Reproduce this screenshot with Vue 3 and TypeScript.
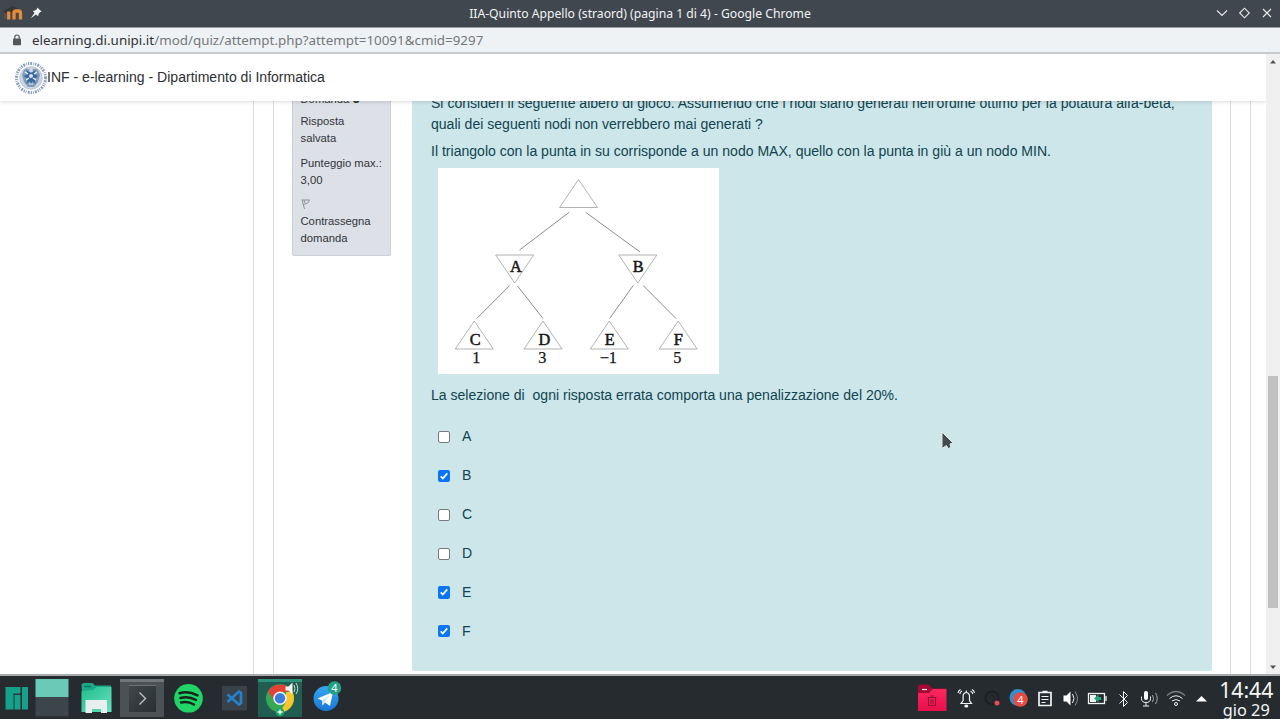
<script setup lang="ts">
import { ref } from 'vue'

interface Answer {
  label: string
  checked: boolean
}

interface TreeNode {
  label: string
  x: number
  y: number
  up: boolean
  textX: number
  value?: string
  valueX?: number
}

const answers = ref<Answer[]>([
  { label: 'A', checked: false },
  { label: 'B', checked: true },
  { label: 'C', checked: false },
  { label: 'D', checked: false },
  { label: 'E', checked: true },
  { label: 'F', checked: true },
])

const nodes: TreeNode[] = [
  { label: '', x: 140.5, y: 11.5, up: true, textX: 0 },
  { label: 'A', x: 76.7, y: 87, up: false, textX: 78 },
  { label: 'B', x: 199.8, y: 87, up: false, textX: 200.3 },
  { label: 'C', x: 36.3, y: 153, up: true, textX: 37.2, value: '1', valueX: 38.3 },
  { label: 'D', x: 105, y: 153, up: true, textX: 106.3, value: '3', valueX: 104.3 },
  { label: 'E', x: 171.3, y: 153, up: true, textX: 171.8, value: '−1', valueX: 170.3 },
  { label: 'F', x: 240.2, y: 153, up: true, textX: 240.3, value: '5', valueX: 239.3 },
]

const edges: number[][] = [
  [131.2, 44.3, 81.5, 82],
  [147.7, 44.3, 202, 84],
  [71.7, 117.5, 38.7, 150.5],
  [79.500, 118, 105, 150.5],
  [195.2, 117.5, 171.7, 150.5],
  [205.2, 117.5, 238, 150.5],
]

function shape(n: TreeNode): string {
  const top = n.up ? n.y : n.y + 28
  const base = n.up ? n.y + 28 : n.y
  return `${n.x},${top} ${n.x + 19},${base} ${n.x - 19},${base}`
}
</script>

<template>
  <div class="screen">
    <header class="titlebar">
      <svg class="moodle" width="22" height="18" viewBox="0 0 22 18">
        <path d="M0 7 10 2 15 5 9 8 2 9z" fill="#343638" />
        <path d="M5.700 15.500V7.500M11 15.500V9Q11 7 13 7H15.500Q17.500 7 17.500 9V15.500" fill="none" stroke="#e78b36" stroke-width="3.300" />
        <path d="M2 9v5" stroke="#626365" />
      </svg>
      <svg class="pin" width="12" height="12" viewBox="0 0 12 12">
        <path d="M7.300.4 11.600 4.500 10.300 5 8.500 7 8.300 9.200 5.900 7.400.6 11.500 4.500 6 2.800 4 5.100 3.600 7 2z" fill="#f5f6f6" />
      </svg>
      <span class="window-title">IIA-Quinto Appello (straord) (pagina 1 di 4) - Google Chrome</span>
      <svg class="controls" width="56" height="14" viewBox="0 0 56 14">
        <path d="M1 4.500 6 9.500 11 4.500M23.700 7 28.500 2.200 33.300 7 28.500 11.800zM47 3l8 8m0-8-8 8" fill="none" stroke="#e8eaeb" stroke-width="1.100" />
      </svg>
    </header>

    <div class="urlbar">
      <svg class="lock" width="10" height="12" viewBox="0 0 10 12">
        <path d="M2.800 5V3.200a2.200 2.200 0 0 1 4.400 0V5" fill="none" stroke="#54575a" stroke-width="1.200" />
        <rect x="1" y="4.500" width="8" height="6.700" rx=".8" fill="#54575a" />
      </svg>
      <span class="url"><b>elearning.di.unipi.it</b>/mod/quiz/attempt.php?attempt=10091&amp;cmid=9297</span>
    </div>

    <div class="viewport">
      <main class="page">
        <nav class="navbar">
          <svg class="seal" width="34" height="34" viewBox="0 0 34 34" fill="none">
            <circle cx="17" cy="17" r="14.500" stroke="#8ba0bd" stroke-width="3" stroke-dasharray="1.300 1 2 1.200 .8 .9" />
            <circle cx="17" cy="17" r="11.300" fill="#cad6e3" stroke="#a9b8cc" stroke-width=".7" />
            <path d="M10 9q3-3 6 0l1 3 1-3q3-3 6 0l2 5-2 7-4 5h-6l-4-5-2-7z" fill="#809abb" />
            <path d="M12 9l2 4-4 2 4 3-2 5 4-3 1 5 1-5 4 3-2-5 4-3-4-2 2-4-5 3z" fill="#37669a" />
            <path d="M11 11l3 2m6 0 3-2M12 19l3-2m4 0 3 2M15 10h4M15 23h4" stroke="#edf3fa" stroke-width="1.200" />
            <circle cx="17" cy="15" r="2" fill="#d9e4ef" />
          </svg>
          <span class="brand">INF - e-learning - Dipartimento di Informatica</span>
        </nav>
        <div class="scroll">
          <div class="gutter"></div>
          <div class="region">
            <aside class="info">
              <p class="number">Domanda <b>9</b></p>
              <p>Risposta<br />salvata</p>
              <p>Punteggio max.:<br />3,00</p>
              <div class="flag">
                <svg width="10" height="12" viewBox="0 0 10 12"><path d="M1 1.500 3.500 11M1.500 2h7L6.800 5 2.500 6.500M3 2l1 3" fill="none" stroke="#85898d" stroke-width=".9" /></svg>
                <span>Contrassegna<br />domanda</span>
              </div>
            </aside>
            <section class="question">
              <p class="line-one">Si consideri il seguente albero di gioco. Assumendo che i nodi siano generati nell'ordine ottimo per la potatura alfa-beta,<br />quali dei seguenti nodi non verrebbero mai generati ?</p>
              <p class="note">Il triangolo con la punta in su corrisponde a un nodo MAX, quello con la punta in giù a un nodo MIN.</p>
              <svg class="tree" width="281" height="206" viewBox="0 0 281 206">
                <line v-for="(e, i) in edges" :key="i" :x1="e[0]" :y1="e[1]" :x2="e[2]" :y2="e[3]" />
                <g v-for="n in nodes" :key="n.label">
                  <polygon :points="shape(n)" />
                  <text v-if="n.label" :x="n.textX" :y="n.up ? n.y + 23.500 : n.y + 16.500" class="letter">{{ n.label }}</text>
                  <text v-if="n.value" :x="n.valueX" :y="n.y + 41.800">{{ n.value }}</text>
                </g>
              </svg>
              <p class="penalty">La selezione di&nbsp; ogni risposta errata comporta una penalizzazione del 20%.</p>
              <div class="answers">
                <label v-for="a in answers" :key="a.label" class="answer">
                  <input v-model="a.checked" type="checkbox" />
                  <span class="box" :class="{ on: a.checked }">
                    <svg v-if="a.checked" width="12" height="12" viewBox="0 0 13 13"><path d="M3 6.900 5.200 9.200 10 3.700" fill="none" stroke="#fff" stroke-width="1.900" /></svg>
                  </span>
                  <span>{{ a.label }}</span>
                </label>
              </div>
            </section>
          </div>
          <div class="margin"></div>
        </div>
      </main>
      <div class="scrollbar">
        <svg width="8" height="5" viewBox="0 0 8 5"><path d="M1 4.500 4 1l3 3.500z" fill="#505050" /></svg>
        <div class="thumb"></div>
        <svg class="down" width="8" height="5" viewBox="0 0 8 5"><path d="M1 .5 4 4 7 .5z" fill="#505050" /></svg>
      </div>
      <svg class="cursor" width="16" height="22" viewBox="0 0 16 22">
        <path d="M3 2v16.500l4.500-3 1.500 3 3-1-1-3.500 3-1z" fill="#444b4e" stroke="#e4eeee" stroke-width="1" />
      </svg>
    </div>

    <footer class="taskbar">
      <div class="launchers">
        <svg width="350" height="43" viewBox="0 0 350 43">
          <defs>
            <linearGradient id="folder" x1="0" y1="0" x2="1" y2="1"><stop stop-color="#20bd8d" /><stop offset="1" stop-color="#67e2be" /></linearGradient>
            <linearGradient id="tile" x1="0" y1="0" x2="1" y2="1"><stop stop-color="#40484b" /><stop offset="1" stop-color="#292f31" /></linearGradient>
            <linearGradient id="sky" x1="0" y1="0" x2="0" y2="1"><stop stop-color="#36a8ef" /><stop offset="1" stop-color="#1877d5" /></linearGradient>
          </defs>
          <path d="M5.500 11h15v6h-7v16.500h-8zM14.500 19h6v14.500h-6zM22 11h6v22.500h-6z" fill="#18a18a" />
          <path d="M13.300 33V17.700h7" fill="none" stroke="#157d6d" />
          <rect x="35.500" y="3" width="33" height="18" fill="#6bc9b7" />
          <rect x="35.500" y="21" width="33" height="19.500" fill="#3c454a" />
          <path d="M81.500 8.500 83.500 7h9l2.500 2.500h16V16h-29z" fill="#1da989" />
          <path d="M81.500 15l12-1 3-3h15v25h-30z" fill="url(#folder)" />
          <path d="M84 10.500h7" stroke="#0d755f" stroke-width="1.500" />
          <path d="M85.500 24h21.500v13H101v-4h-9v4h-6.500z" fill="#e9eeee" />
          <rect x="120" y="3" width="44" height="38" fill="#4b5256" /><rect x="120" y="3" width="44" height="3" fill="#71777b" />
          <rect x="129" y="9" width="27" height="27" fill="url(#tile)" /><path d="M129 9.500h27" stroke="#6c7274" /><path d="M139.500 16.500l6 6-6 6" fill="none" stroke="#c0c3c4" stroke-width="1.400" />
          <circle cx="188.500" cy="22.300" r="14.300" fill="#20d565" />
          <path d="M179.500 17.200q9-2.500 18 2.200M180.500 22q8.500-2 15.500 2M181 26.500q7-1.500 13 2" fill="none" stroke="#17231d" stroke-width="2.500" stroke-linecap="round" />
          <rect x="222" y="10" width="25" height="24.500" fill="#394149" />
          <path d="M227.500 18.500 239 28.500l2-1.500V17l-2-1.500L227.500 26" fill="none" stroke="#2382cc" stroke-width="2.700" stroke-linejoin="round" />
          <rect x="258" y="3" width="44" height="38" fill="#215e51" /><rect x="258" y="3" width="44" height="3" fill="#2b937b" />
          <circle cx="280" cy="22.300" r="14" fill="#36a852" />
          <path d="M268 15.300A14 14 0 0 1 292.100 15.300L280 16.300l-5.500 9z" fill="#e34133" />
          <path d="M292.100 15.300A14 14 0 0 1 280 36.300l6-10.500 0-9.500z" fill="#fbc52c" />
          <circle cx="280" cy="22.300" r="6.700" fill="#f5f5f4" /><circle cx="280" cy="22.300" r="5.200" fill="#3b7ddd" />
          <path d="M285.500 10.500h3l4-4v12l-4-4h-3z" fill="#f1f4f3" /><path d="M294 9q2 3.500 0 7m2-9q3.500 5.500 0 11" fill="none" stroke="#cbd7d3" />
          <circle cx="280" cy="36" r="4.300" fill="#19a765" /><path d="M277.500 36h5m-2.500-2.500v5" stroke="#fff" stroke-width="1.300" />
          <circle cx="326" cy="22.500" r="12.500" fill="url(#sky)" />
          <path d="M317.500 22.500 333 16l-3 14-5-3.500-2.500 3-.5-5z" fill="#fff" /><path d="M322 24.500l8-6-5.500 7.500-2 3.500z" fill="#cfe0ec" />
          <circle cx="334.500" cy="12" r="6.800" fill="#20a188" /><text x="334.500" y="16" class="badge">4</text>
        </svg>
      </div>
      <div class="tray">
        <svg width="300" height="43" viewBox="910 0 300 43" fill="none" stroke="#f1f2f2">
          <defs>
            <linearGradient id="trash" x1="0" y1="0" x2="0" y2="1"><stop stop-color="#fc285d" /><stop offset="1" stop-color="#e80f4c" /></linearGradient>
          </defs>
          <path d="M918 10l2-1.500h9l3 4h14v8h-28z" fill="#a50a36" stroke="none" /><path d="M918 17h11l4-4h13.500v22H918z" fill="url(#trash)" stroke="none" />
          <path d="M922 13.500h5" stroke-width="1.200" /><path d="M927.500 21.500h9m-6-1.500h3m-5 1.500V29.500h7v-8m-4.500 2v4m2-4v4" stroke="#8e1239" />
          <path d="M961 27.500h10.500l-2-3v-5q-.5-3-3.200-3t-3.200 3v5zM966.300 14.500v2M962 15q-1.800 1-2.300 3m.8-4.500q-2 1-2.500 3.500M970.500 15q1.800 1 2.300 3m-.8-4.500q2 1 2.500 3.500" stroke-width="1.200" /><ellipse cx="966.300" cy="30" rx="2" ry="1.500" fill="#fff" stroke="none" />
          <circle cx="992" cy="22" r="6.500" stroke="#1b2022" stroke-width="2" /><path d="M989 22l3-3 3 3-3 3" stroke="#1b2022" /><circle cx="997" cy="27" r="2.500" fill="#e44d5c" stroke="none" />
          <circle cx="1018" cy="21.500" r="8.500" fill="#318fce" stroke="none" /><circle cx="1020.500" cy="23.500" r="7.300" fill="#e74a40" stroke="none" /><text x="1020.500" y="27.500" class="badge">4</text>
          <path d="M1039 16.500h12v13h-12zM1042.500 15.500h5" stroke-width="1.700" /><path d="M1041.500 20.500h7m-7 3h7m-7 3h4" />
          <path d="M1063.500 19.500h3l4-4v14l-4-4h-3z" fill="#fff" stroke="none" /><path d="M1072.500 18q3 4.500 0 9" /><path d="M1075 15.500q5 7 0 14" stroke="#878c8e" />
          <rect x="1088.500" y="17.500" width="16" height="10" stroke-width="1.300" /><path d="M1106 20v5" stroke-width="1.300" /><path d="M1090 19h6v7h-6z" fill="#f3f4f4" stroke="none" /><path d="M1094 22.500l4.500-4v2.500h2.500v3h-2.500V26.500z" fill="#24a77d" stroke="none" />
          <path d="M1119.500 18.500l8 8-4 4v-15l4 4-8 8" />
          <rect x="1144" y="15" width="4" height="9" rx="2" fill="#fff" stroke="none" /><path d="M1141.500 20.500v2q0 4 4.500 4t4.500-4v-2M1146 27v3m-3 0h6" /><path d="M1152.500 19q2 3.500 0 7m3-9q3.500 5.500 0 11" stroke="#a5a9ab" />
          <path d="M1167 19.500q9-8 18 0" stroke="#7d8385" stroke-width="1.500" /><path d="M1169.500 22.500q6.500-5.500 13 0m-10.500 2.500q4-3 8 0" /><circle cx="1176" cy="28" r="1.500" />
          <path d="M1196 25.500l5.500-5.500 5.500 5.500z" fill="#fff" stroke="none" />
        </svg>
        <div class="clock"><div class="time">14:44</div><div class="date">gio 29</div></div>
      </div>
    </footer>
  </div>
</template>

<style>
body {
  margin: 0;
  overflow: hidden;
}
</style>

<style scoped>
* {
  box-sizing: border-box;
}
svg {
  display: block;
  flex: none;
}
p {
  margin: 0;
}
.screen {
  width: 1280px;
  height: 719px;
  display: flex;
  flex-direction: column;
  overflow: hidden;
  background: #fff;
  font-family: "Liberation Sans", Arial, sans-serif;
}
.titlebar {
  height: 28px;
  flex: none;
  display: grid;
  grid-template-columns: 22px 12px 1fr 56px;
  align-items: center;
  padding: 0 8px 1px 3px;
  background: #40474e;
  border-bottom: 1px solid #979ca1;
  color: #f2f3f4;
  font-family: "Noto Sans", sans-serif;
  font-size: 12.18px;
}
.pin {
  margin-left: 5px;
}
.window-title {
  justify-self: center;
  margin-left: 27px;
  white-space: nowrap;
}
.urlbar {
  height: 26px;
  flex: none;
  display: flex;
  align-items: center;
  gap: 10px;
  padding: 0 12px;
  background: #eff2f4;
  border-bottom: 2px solid #c8cbcd;
  font-family: "Noto Sans", sans-serif;
  font-size: 13.39px;
  color: #74787c;
}
.url b {
  font-weight: 400;
  color: #2e3236;
}
.viewport {
  height: 622px;
  flex: none;
  display: flex;
  position: relative;
  border-bottom: 2px solid #a8abad;
}
.page {
  flex: 1;
  display: flex;
  flex-direction: column;
  overflow: hidden;
}
.navbar {
  height: 47px;
  flex: none;
  display: flex;
  align-items: center;
  padding-left: 14px;
  background: #fff;
  box-shadow: 0 1px 4px rgba(0, 0, 0, 0.14);
  position: relative;
  z-index: 1;
  color: #2d3033;
  font-size: 14.06px;
}
.brand {
  margin-left: -1px;
  padding-bottom: 1px;
}
.scroll {
  flex: 1;
  min-height: 0;
  display: flex;
}
.gutter {
  width: 254px;
  border-right: 1px solid #dcdedf;
}
.region {
  width: 958px;
  margin-left: 19px;
  display: flex;
  align-items: flex-start;
  gap: 21px;
  padding-left: 18px;
  border: solid #dcdedf;
  border-width: 0 1px;
}
.margin {
  width: 20px;
  border-right: 1px solid #dcdedf;
}
.info {
  width: 99px;
  height: 165px;
  margin-top: -10px;
  padding: 0 0 0 7.5px;
  background: #dde0e6;
  border: 1px solid #cbcfd6;
  border-radius: 2px;
  color: #303438;
  font-size: 11.25px;
  line-height: 17px;
  white-space: nowrap;
}
.info p {
  margin-bottom: 8px;
}
.info .number {
  height: 14px;
  margin-bottom: 7.4px;
  line-height: 12px;
}
.number b {
  font-size: 14px;
}
.flag svg {
  margin: 9px 0 3px;
}
.question {
  width: 800px;
  height: 580px;
  margin-top: -10px;
  padding: 2px 19px;
  background: #cde6e9;
  border-radius: 3px;
  color: #114451;
  font-size: 14.06px;
  line-height: 21px;
  white-space: nowrap;
}
.note {
  margin-top: 6px;
}
.tree {
  margin: 6px 0 0 7px;
  background: #fff;
  stroke: #999;
  stroke-width: 0.75;
}
.tree polygon {
  fill: none;
  stroke: #999;
}
.tree line {
  stroke: #666;
}
.tree text {
  fill: #161616;
  stroke: #161616;
  stroke-width: 0.25;
  font: 16.3px "Liberation Serif", serif;
  text-anchor: middle;
}
.tree .letter {
  stroke-width: 0.5;
}
.penalty {
  margin-top: 11px;
}
.answers {
  margin: 11.5px 0 0 7.2px;
}
.answer {
  height: 38.9px;
  display: flex;
  align-items: center;
  gap: 11.6px;
  position: relative;
}
.answer input {
  position: absolute;
  opacity: 0;
}
.box {
  width: 12.2px;
  height: 12.2px;
  flex: none;
  background: #fff;
  border: 1px solid #767b7d;
  border-radius: 2px;
}
.box.on {
  border: 0;
  background: #0b75f5;
}
.scrollbar {
  width: 14px;
  display: flex;
  flex-direction: column;
  align-items: center;
  padding: 5px 0 4px;
  background: #f0f0f0;
}
.thumb {
  width: 10px;
  height: 232px;
  margin-top: 312px;
  background: #c1c1c1;
}
.down {
  margin-top: auto;
}
.cursor {
  position: absolute;
  left: 939px;
  top: 376px;
}
.taskbar {
  height: 43px;
  flex: none;
  display: flex;
  justify-content: space-between;
  background: #252b2f;
}
.tray {
  display: flex;
}
.clock {
  width: 70px;
  padding-left: 2.5px;
  text-align: center;
  color: #f5f6f6;
  font-family: "Noto Sans", sans-serif;
}
.time {
  margin-top: 3px;
  font-size: 21.2px;
  line-height: 21px;
}
.date {
  font-size: 16.3px;
  line-height: 20px;
}
.badge {
  font: 11px "Noto Sans", sans-serif;
  text-anchor: middle;
  fill: #fff;
  stroke: none;
}
</style>
